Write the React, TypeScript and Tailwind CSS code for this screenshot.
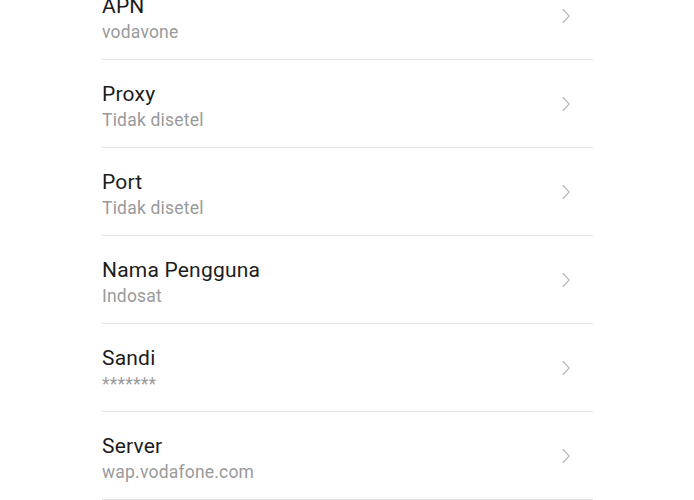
const rows = [
  { title: "APN", value: "vodavone" },
  { title: "Proxy", value: "Tidak disetel" },
  { title: "Port", value: "Tidak disetel" },
  { title: "Nama Pengguna", value: "Indosat" },
  { title: "Sandi", value: "*******" },
  { title: "Server", value: "wap.vodafone.com" },
]

function Chevron() {
  return (
    <svg width="10" height="16" viewBox="0 0 10 16" fill="none" className="shrink-0">
      <path d="M2 1.5 L8 8 L2 14.5" stroke="#c2c2c2" strokeWidth="1.6" strokeLinecap="round" strokeLinejoin="round" />
    </svg>
  )
}

export default function App() {
  return (
    <div className="w-[694px] h-[500px] overflow-hidden bg-white font-['Roboto',sans-serif]">
      <div className="w-[491px] ml-[102px] -mt-[28px]">
        {rows.map((r) => (
          <div key={r.title} className="h-[88px] flex justify-between border-b border-[#e2e2e2] pr-[22px]">
            <div className="flex flex-col pt-[21px]">
              <span className="text-[21px] leading-[26px] tracking-[0.2px] text-[#1c1c1c]">{r.title}</span>
              <span className="text-[17.5px] leading-[22px] tracking-[0.2px] text-[#9a9a9a] mt-[2px]">{r.value}</span>
            </div>
            <div className="flex items-center">
              <Chevron />
            </div>
          </div>
        ))}
      </div>
    </div>
  )
}
